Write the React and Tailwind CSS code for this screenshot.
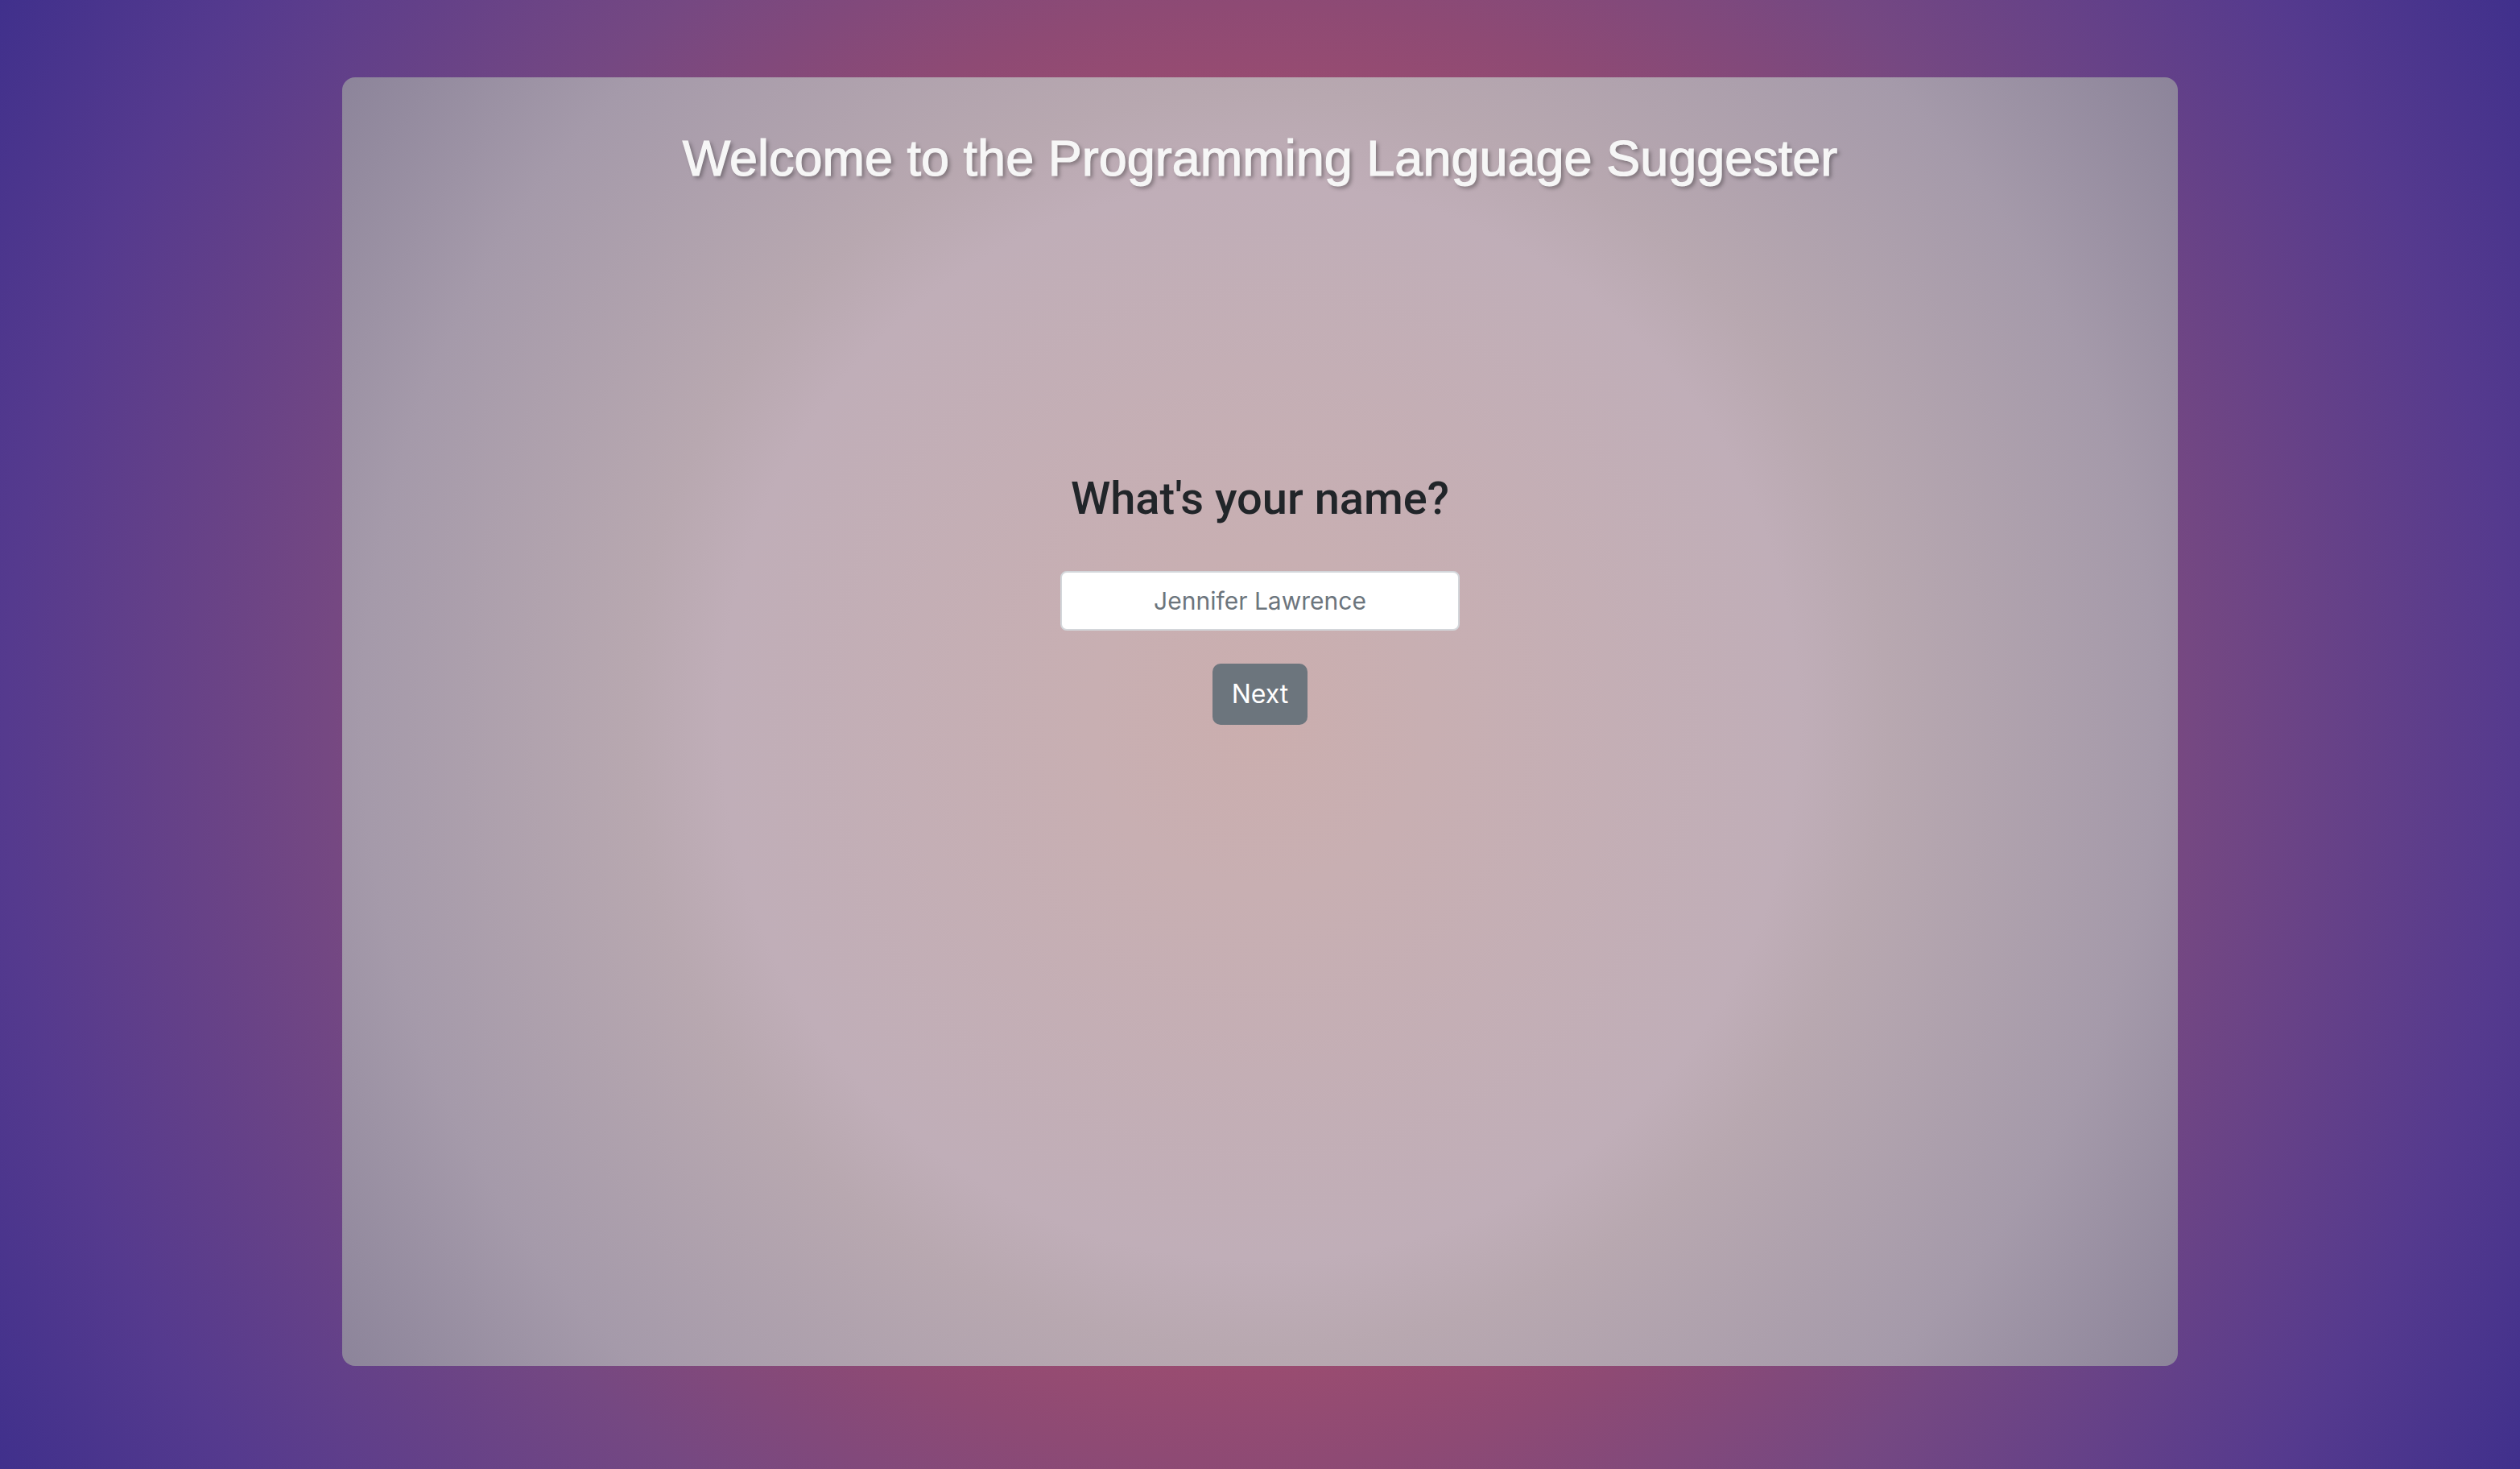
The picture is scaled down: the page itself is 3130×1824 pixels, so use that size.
export default function App() {
  return (
    <div className="min-h-screen w-full bg-[radial-gradient(circle_at_center,#d65a5e_0%,#b0506a_30%,#8e4a74_50%,#754882_64%,#553a8e_86%,#40308c_100%)] pt-[96px] pb-[128px]">
      <div className="mx-auto w-[2280px] h-[1600px] rounded-[16px] bg-[radial-gradient(circle_at_center,#cbaeae_0%,#c8afb2_15%,#c0aeb8_48%,#b8a8b0_56%,#a59aaa_80%,#8c849a_100%)] flex flex-col items-center">
        <h1
          className="pt-[63px] text-[63px] leading-[1.2] text-[#f6f6f6] font-['Liberation_Sans',Arial,sans-serif] [-webkit-text-stroke:1.2px_#f6f6f6] [text-shadow:3px_3px_5px_rgba(0,0,0,0.35)]"
        >
          Welcome to the Programming Language Suggester
        </h1>

        <div className="mt-[351px] flex flex-col items-center font-['Inter',sans-serif]">
          <h2 className="text-[56px] leading-[1.2] font-medium text-[#212529] font-['Roboto',sans-serif]">
            What's your name?
          </h2>
          <input
            type="text"
            placeholder="Jennifer Lawrence"
            className="mt-[56px] w-[496px] h-[74px] rounded-[8px] border-2 border-[#d3d6da] bg-white text-center text-[30px] text-[#212529] placeholder:text-[#6c757d] outline-none font-['Inter',sans-serif]"
          />
          <button className="mt-[41px] w-[118px] h-[76px] rounded-[10px] bg-[#6c757d] text-white text-[32px] font-['Inter',sans-serif]">
            Next
          </button>
        </div>
      </div>
    </div>
  );
}
